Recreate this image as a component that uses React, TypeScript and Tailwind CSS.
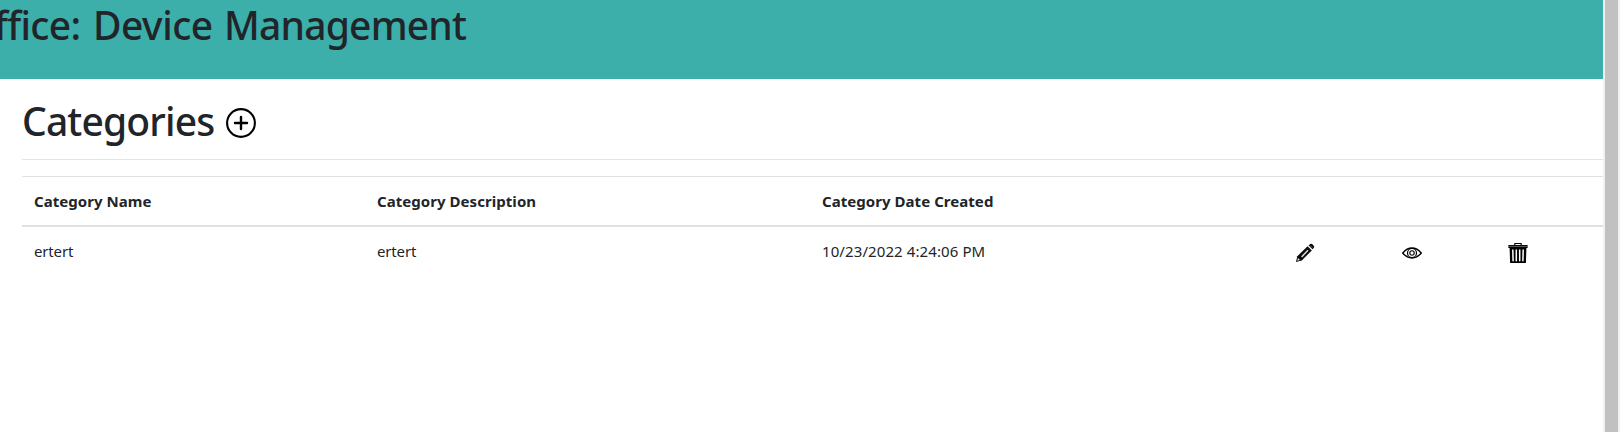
function PlusCircle() {
  return (
    <svg viewBox="0 0 30 30" className="mt-[29px] size-[30px]" fill="none" stroke="#000">
      <circle cx="15" cy="15" r="13.9" strokeWidth="2.1" />
      <path d="M15 9v12M9 15h12" strokeWidth="2.4" strokeLinecap="round" />
    </svg>
  );
}

function Pencil() {
  return (
    <svg viewBox="0 0 20 20" className="size-5">
      <path d="M1 19 2.3 13.2 12.6 3.2 16.8 7.4 6.8 17.4Z" fill="#0a0a0a" />
      <path d="M13.6 2.4 15.2.9Q16.2.3 17.2 1.1L18.9 2.9Q19.6 3.8 18.9 4.8L17.5 6.3Z" fill="#0a0a0a" />
      <path d="m2.9 14.9 2.2 2.2-2.8.7Z" fill="#ddd" />
      <path d="m6.6 13.9 6.4-6.6" stroke="#ddd" strokeWidth="1.5" />
      <path d="m15.4 2.8 1.8 1.8" stroke="#888" strokeWidth=".8" />
    </svg>
  );
}

function Eye() {
  return (
    <svg viewBox="0 0 20 20" className="size-5" fill="none" stroke="#000">
      <path d="M.7 10Q4.8 5 10 5t9.3 5Q15.2 15 10 15T.7 10Z" strokeWidth="1.3" />
      <circle cx="10" cy="10" r="4.5" strokeWidth="1.2" />
      <circle cx="10" cy="10" r="2.2" strokeWidth="1.1" />
    </svg>
  );
}

function Trash() {
  return (
    <svg viewBox="0 0 20 20" className="size-5">
      <path d="M6.8 2.5V1q0-.5.5-.5h5.4q.5 0 .5.5v1.5" fill="none" stroke="#000" strokeWidth="1.2" />
      <path d="M.4 2h19.2v3H.4ZM1.6 5h16.8l-.5 15H2.1Z" fill="#000" />
      <path d="M.4 3.4h19.2" stroke="#777" strokeWidth=".8" />
      <path d="m4.8 6.5.3 11.7M8.3 6.5v11.7M11.7 6.5v11.7M15.2 6.5l-.3 11.7" stroke="#fff" strokeWidth="1.5" />
    </svg>
  );
}

const columns = "grid grid-cols-[343px_445px_473px_107px_106px_1fr] pl-3";

export default function App() {
  return (
    <div className="flex h-[432px] w-[1620px] overflow-hidden bg-white font-['Noto_Sans','Open_Sans',sans-serif] text-[#212529]">
      <div className="flex min-w-0 flex-1 flex-col">
        <header className="h-[79px] shrink-0 overflow-hidden bg-[#3cafab]">
          <h1 className="-ml-1.5 flex whitespace-nowrap text-[39px] font-medium leading-[49px]">
            <span className="w-[99px] tracking-[-0.7px]">ffice:</span>
            <span className="w-[131px] tracking-[-0.5px]">Device</span>
            <span className="tracking-[-0.8px]">Management</span>
          </h1>
        </header>
        <main className="pl-[22px]">
          <div className="flex h-20 items-start">
            <h2 className="mt-4 w-[204px] text-[39px] font-medium leading-[52px] tracking-[-0.85px]">Categories</h2>
            <PlusCircle />
          </div>
          <div className="mb-4 border-t border-[#e3e4e5]" />
          <div className={`${columns} h-[51px] border-b-2 border-t border-b-[#dee2e6] border-t-[#dee2e6] text-[15px] font-bold leading-[48px] tracking-[0.05px]`}>
            <span>Category Name</span>
            <span>Category Description</span>
            <span>Category Date Created</span>
          </div>
          <div className={`${columns} h-[50px] text-[15px] leading-[48px]`}>
            <span className="tracking-[-0.15px]">ertert</span>
            <span className="tracking-[-0.15px]">ertert</span>
            <span className="tracking-[0.1px]">10/23/2022 4:24:06 PM</span>
            <span className="pt-4"><Pencil /></span>
            <span className="pt-4"><Eye /></span>
            <span className="pt-4"><Trash /></span>
          </div>
        </main>
      </div>
      <div className="w-[17px] bg-[#f1f1f1] pl-0.5 pr-0.5">
        <div className="h-full bg-[#c1c1c1]" />
      </div>
    </div>
  );
}
